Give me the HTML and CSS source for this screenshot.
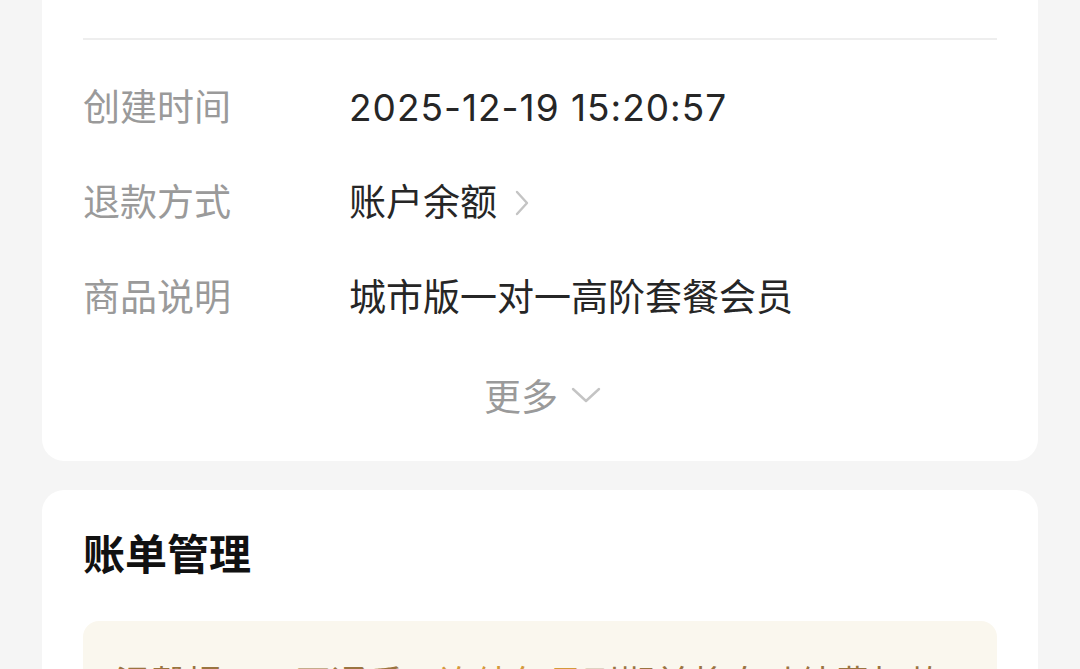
FILE: index.html
```html
<!DOCTYPE html>
<html lang="zh-CN">
<head>
<meta charset="utf-8">
<link rel="stylesheet" href="styles.css">
</head>
<body>
<div class="page">
  <section class="card card-info">
    <div class="divider"></div>
    <div class="row">
      <div class="label">创建时间</div>
      <div class="value date">2025-12-19 15:20:57</div>
    </div>
    <div class="row">
      <div class="label">退款方式</div>
      <div class="value">账户余额<svg class="chev-right" viewBox="0 0 14 28" width="14" height="28"><path d="M2 3 L12 14 L2 25" fill="none" stroke="#c4c4c4" stroke-width="2.4" stroke-linecap="round" stroke-linejoin="round"/></svg></div>
    </div>
    <div class="row">
      <div class="label">商品说明</div>
      <div class="value">城市版一对一高阶套餐会员</div>
    </div>
    <div class="more">更多<svg class="chev-down" viewBox="0 0 32 18" width="32" height="18"><path d="M3 3 L16 15 L29 3" fill="none" stroke="#c4c4c4" stroke-width="2.4" stroke-linecap="round" stroke-linejoin="round"/></svg></div>
  </section>
  <section class="card card-bill">
    <h2 class="title">账单管理</h2>
    <div class="notice">温馨提示：开通后，<span class="hl">连续包月</span>到期前将自动续费扣款</div>
  </section>
</div>
</body>
</html>
```
FILE: styles.css
```css
* { box-sizing: border-box; }
html, body { margin: 0; padding: 0; }
body {
  background: #f5f5f5;
  font-family: "Inter", "Noto Sans CJK SC", "Noto Sans", sans-serif;
  width: 1080px;
  height: 669px;
  overflow: hidden;
}
.page {
  padding: 0 42px;
  display: flex;
  flex-direction: column;
  gap: 29px;
  margin-top: -30px;
}
.card {
  background: #fff;
  border-radius: 22px;
  padding: 0 41px;
}
.card-info {
  padding-top: 68px;
  padding-bottom: 16px;
}
.divider {
  height: 2px;
  background: #eeeeee;
  margin-bottom: 20px;
}
.row {
  display: flex;
  align-items: center;
  height: 95px;
  font-size: 37px;
  line-height: 1;
}
.label {
  width: 266px;
  color: #9a9a9a;
}
.value {
  color: #262626;
  display: flex;
  align-items: center;
}
.date { letter-spacing: 1px; }
.chev-right { margin-left: 18px; }
.more {
  display: flex;
  justify-content: center;
  align-items: center;
  font-size: 37px;
  color: #9a9a9a;
  height: 100px;
  padding-left: 6px;
}
.chev-down { margin-left: 12px; }
.card-bill {
  padding-top: 37px;
  padding-bottom: 60px;
}
.title {
  margin: 0;
  font-size: 42px;
  font-weight: 700;
  color: #111;
  line-height: 56px;
}
.notice {
  margin-top: 38px;
  background: #faf7ee;
  border-radius: 16px;
  padding: 37px 32px 30px;
  font-size: 36px;
  line-height: 52px;
  color: #9a7440;
}
.hl { color: #d49a3a; }
```
